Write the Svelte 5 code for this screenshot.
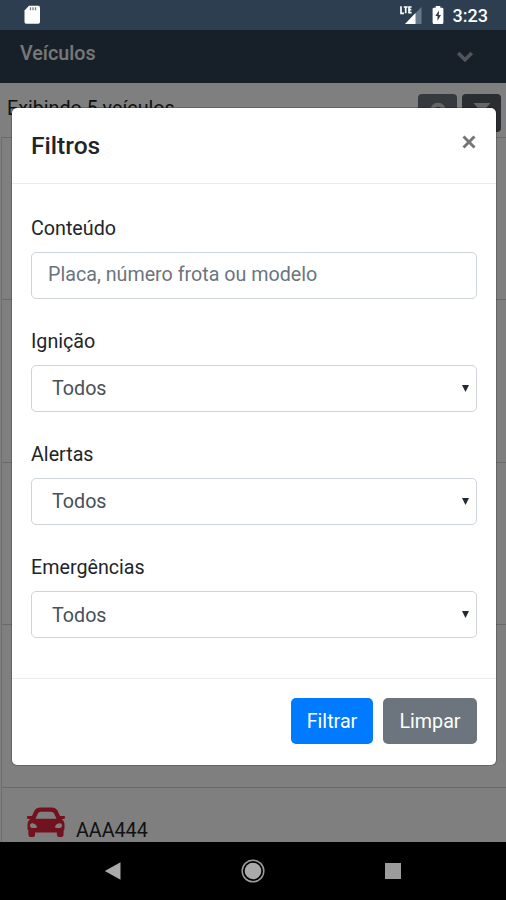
<script>
	let content = '';

	let selects = [
		{ id: 'ignicao', label: 'Ignição', value: 'Todos' },
		{ id: 'alertas', label: 'Alertas', value: 'Todos' },
		{ id: 'emergencias', label: 'Emergências', value: 'Todos' },
	];

	let vehicles = [
		{ id: 1, note: '' },
		{ id: 2, note: '' },
		{ id: 3, note: '' },
		{ id: 4, note: ',' },
		{ id: 5, plate: 'AAA444' },
	];

	function clear() {
		content = '';
		selects = selects.map(s => ({ ...s, value: 'Todos' }));
	}
</script>

<div class="phone">
	<div class="status">
		<svg width="18" height="20" viewBox="0 0 18 20">
			<path d="M6 .7h9.3q1.7 0 1.7 1.7v14.7q0 1.7-1.7 1.7H3.2q-1.7 0-1.7-1.7V5.4z" fill="#fff" />
			<path d="M7.5 2.3v3M10 2.3v3M12.5 2.3v3" stroke="#6f7b87" stroke-width="1.3" />
		</svg>
		<div class="indicators">
			<svg width="23" height="20" viewBox="0 0 23 20">
				<path d="M21.500 2V19H5z" fill="#66788a" />
				<path d="M15.500 8V19H5z" fill="#fff" />
				<path d="M1 1.300v7h3M3.700 2h4M5.700 2v6.300M11.600 2H9v5.600h2.600M9 4.700h2.300" fill="none" stroke="#fff" stroke-width="1.700" />
			</svg>
			<svg class="battery" width="12" height="20" viewBox="0 0 12 20">
				<path d="M3.700 1h4.600v1.700H10q1.400 0 1.400 1.400v13.300q0 1.500-1.400 1.500H2Q.6 18.900.6 17.400V4.100Q.6 2.700 2 2.700h1.700z" fill="#fff" />
				<path d="M7 5.500 3.300 11h2.200v4.700L9 10H6.800z" fill="#2c3e50" />
			</svg>
			<span>3:23</span>
		</div>
	</div>

	<div class="screen">
		<div class="navbar">
			<span>Veículos</span>
			<svg width="18" height="12" viewBox="0 0 18 12">
				<path d="m2.200 2 6.800 6.800L15.800 2" fill="none" stroke="#a4abb3" stroke-width="3.600" />
			</svg>
		</div>
		<div class="toolbar">
			<span>Exibindo 5 veículos</span>
			<div class="tools">
				<button aria-label="Buscar">
					<svg width="20" height="20" viewBox="0 0 20 20">
						<circle cx="10" cy="8.500" r="5.800" fill="none" stroke="#ccc" stroke-width="4" />
						<path d="m13 13 5 5" stroke="#ccc" stroke-width="3" />
					</svg>
				</button>
				<button class="dark" aria-label="Filtrar veículos">
					<svg width="20" height="20" viewBox="0 0 20 20">
						<path d="M1.500 1h17l-7 8v9l-3-3V9z" fill="#ccc" />
					</svg>
				</button>
			</div>
		</div>
		<div class="list">
			{#each vehicles as vehicle (vehicle.id)}
				<div class="vehicle">
					{#if vehicle.plate}
						<svg width="40" height="32" viewBox="0 0 40 32">
							<path
								fill="#e3253c"
								fill-rule="evenodd"
								d="M14.500 1.500h11q4.800 0 6.500 4l2 4.500h4q1.200 0 1 1.100l-.3 1.300q-.2.6-1 .6H35.500q3 2 3 5.500v4.300q0 1.200-.9 1.700V28.800q0 2.200-2.200 2.200h-2.300q-2.200 0-2.200-2.200V26.500H9.100V28.800q0 2.200-2.200 2.200H4.600q-2.200 0-2.200-2.200V24.500Q1.500 24 1.500 22.800V18.500q0-3.500 3-5.500H2.300q-.8 0-1-.6L1 11.100Q.8 10 2 10h4L8 5.500q1.700-4 6.500-4zm.5 4.300q-2.300 0-3.100 1.700L9.500 12.700h21L28.100 7.500Q27.300 5.800 25 5.800zM6.800 17.300C5 16.900 4 18 4 19.500c0 1.900 1.300 2.600 3.500 2.600 2.300 0 3.800-.3 3.500-1.400-.3-1.300-2.200-3-4.200-3.400zM33.200 17.300c1.800-.4 2.800.7 2.800 2.200 0 1.900-1.300 2.600-3.500 2.600-2.300 0-3.800-.3-3.500-1.400.3-1.300 2.200-3 4.200-3.400z"
							/>
						</svg>
						<span>{vehicle.plate}</span>
					{:else}
						<span class="note">{vehicle.note}</span>
					{/if}
				</div>
			{/each}
		</div>

		<div class="backdrop">
			<form class="modal" on:submit|preventDefault>
				<div class="header">
					<h5>Filtros</h5>
					<button type="button" class="close" aria-label="Fechar">
						<svg width="14" height="14" viewBox="0 0 14 14">
							<path d="m1.500 1.500 11 11M12.500 1.500l-11 11" stroke="#757575" stroke-width="2.900" />
						</svg>
					</button>
				</div>
				<div class="body">
					<div class="field">
						<label for="conteudo">Conteúdo</label>
						<div class="control">
							<input id="conteudo" placeholder="Placa, número frota ou modelo" bind:value={content} />
						</div>
					</div>
					{#each selects as field (field.id)}
						<div class="field">
							<label for={field.id}>{field.label}</label>
							<div class="control">
								<select id={field.id} bind:value={field.value}>
									<option>Todos</option>
								</select>
								<svg width="7" height="7" viewBox="0 0 7 7">
									<path d="M0 0h7L3.500 7z" fill="#222b33" />
								</svg>
							</div>
						</div>
					{/each}
				</div>
				<div class="footer">
					<button class="primary">Filtrar</button>
					<button type="button" class="secondary" on:click={clear}>Limpar</button>
				</div>
			</form>
		</div>
	</div>

	<div class="android-nav">
		<svg width="18" height="20" viewBox="0 0 18 20"><path d="M.8 10 16.500 1.300v17.400z" fill="#aaa" /></svg>
		<svg width="24" height="24" viewBox="0 0 24 24">
			<circle cx="12" cy="12" r="10.800" fill="none" stroke="#9a9a9a" stroke-width="1.500" />
			<circle cx="12" cy="12" r="8.300" fill="#aaa" />
		</svg>
		<svg width="18" height="18" viewBox="0 0 18 18"><path d="M1 1h16v16H1z" fill="#9c9c9c" /></svg>
	</div>
</div>

<style>
	:global(body) {
		margin: 0;
	}

	.phone {
		display: flex;
		flex-direction: column;
		width: 506px;
		height: 900px;
		overflow: hidden;
		background: #000;
		font-family: Roboto, sans-serif;
		font-size: 19.7px;
		line-height: 1.5;
		color: #212529;
	}

	button, input, select {
		font: inherit;
		border: none;
	}

	svg {
		display: block;
		flex: none;
	}

	.status {
		display: flex;
		justify-content: space-between;
		align-items: center;
		height: 30px;
		padding: 0 18px 0 23px;
		background: #2c3e50;
	}

	.indicators {
		display: flex;
		align-items: center;
		color: #fff;
		font-size: 18px;
		font-weight: 500;
	}

	.battery {
		margin: 0 9px;
	}

	.screen {
		position: relative;
		height: 812px;
		overflow: hidden;
		background: #fff;
	}

	.navbar {
		display: flex;
		justify-content: space-between;
		box-sizing: border-box;
		height: 53px;
		padding: 9px 32px 0 20px;
		background: #2e3e50;
		color: #eee;
		font-weight: 500;
	}

	.navbar svg {
		margin-top: 12px;
	}

	.toolbar {
		display: flex;
		justify-content: space-between;
		box-sizing: border-box;
		height: 54px;
		padding: 11px 5px 0 7px;
	}

	.tools {
		display: flex;
		gap: 5px;
	}

	.tools button {
		display: flex;
		justify-content: center;
		width: 39px;
		height: 38px;
		padding: 8px 0;
		border-radius: 4px;
		background: #6c757d;
	}

	.tools .dark {
		background: #545b62;
	}

	.list {
		margin-left: 1px;
		border-left: 1px solid #dcdcdc;
	}

	.vehicle {
		display: flex;
		align-items: flex-start;
		box-sizing: border-box;
		height: 162.6px;
		padding: 18px 0 0 24px;
		border-top: 1px solid #d2d2d2;
	}

	.vehicle:first-child {
		height: 162px;
	}

	.vehicle span {
		margin: 10px 0 0 10px;
	}

	.vehicle .note {
		margin: 98px 0 0 131px;
	}

	.backdrop {
		position: absolute;
		inset: 0;
		padding: 77px 9px 0 11px;
		background: rgba(0, 0, 0, .5);
	}

	.modal {
		display: flex;
		flex-direction: column;
		box-sizing: border-box;
		height: 659px;
		border: 1px solid rgba(0, 0, 0, .2);
		border-radius: 6px;
		background: #fff;
		background-clip: padding-box;
	}

	.header {
		display: flex;
		justify-content: space-between;
		box-sizing: border-box;
		height: 76px;
		padding: 20px 20px 20px 19px;
		border-bottom: 1px solid #e9ecef;
	}

	h5 {
		margin: 0;
		font-size: 24.6px;
		font-weight: 500;
		line-height: 36px;
		color: #212529;
	}

	.close {
		align-self: flex-start;
		margin-top: 7px;
		padding: 0;
		background: none;
	}

	.body {
		flex: 1;
		padding: 29px 19px 0;
	}

	.field {
		display: flex;
		flex-direction: column;
		gap: 8px;
		height: 113.1px;
	}

	label {
		padding-top: 1px;
		line-height: 30px;
	}

	.control {
		display: flex;
		align-items: center;
		box-sizing: border-box;
		height: 47px;
		padding-right: 7px;
		border: 1px solid #ced4da;
		border-radius: 5px;
	}

	input, select {
		flex: 1;
		min-width: 0;
		padding: 0 0 2px 16px;
		appearance: none;
		outline: none;
		background: none;
		color: #495057;
	}

	select {
		padding: 1px 0 0 20px;
	}

	input::placeholder {
		color: #6c757d;
		opacity: 1;
	}

	.footer {
		display: flex;
		justify-content: flex-end;
		gap: 10px;
		box-sizing: border-box;
		height: 87px;
		padding: 19px 19px 0;
		border-top: 1px solid #e9ecef;
	}

	.footer button {
		height: 46px;
		padding: 1px 0 0;
		border-radius: 5px;
		color: #fff;
	}

	.primary {
		width: 82px;
		background: #007bff;
	}

	.secondary {
		width: 94px;
		background: #6c757d;
	}

	.android-nav {
		display: flex;
		justify-content: space-between;
		align-items: center;
		height: 58px;
		padding: 0 104px;
	}
</style>
